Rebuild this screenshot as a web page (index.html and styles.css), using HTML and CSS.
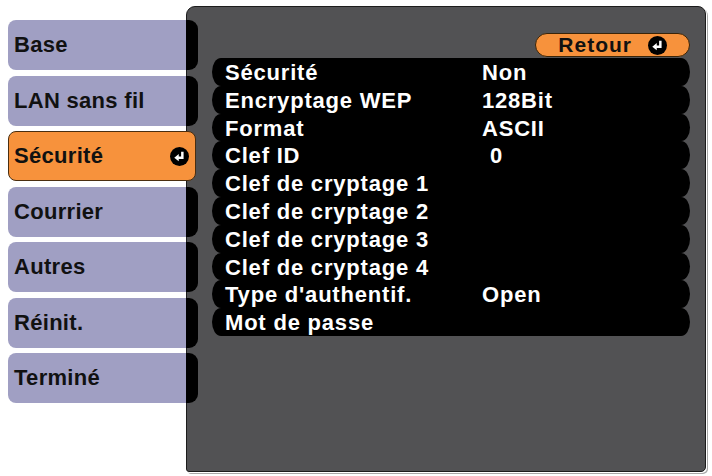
FILE: index.html
```html
<!DOCTYPE html>
<html lang="fr">
<head>
    <meta charset="UTF-8">
    <meta name="viewport" content="width=device-width, initial-scale=1.0">
    <title>Sécurité</title>
    <link rel="stylesheet" href="styles.css">
</head>
<body>
    <div class="menu">
        <div class="menu-item"><span class="menu-label">Base</span><span class="menu-tab"></span></div>
        <div class="menu-item"><span class="menu-label">LAN sans fil</span><span class="menu-tab"></span></div>
        <div class="menu-item active">
            <span class="menu-label">Sécurité</span>
            <svg class="enter-icon" viewBox="0 0 20 20"><circle cx="10" cy="10" r="10"/><path d="M13 5 V11.2 H8.5" /><polygon points="4.5,11.2 9.2,7.4 9.2,15"/></svg>
        </div>
        <div class="menu-item"><span class="menu-label">Courrier</span><span class="menu-tab"></span></div>
        <div class="menu-item"><span class="menu-label">Autres</span><span class="menu-tab"></span></div>
        <div class="menu-item"><span class="menu-label">Réinit.</span><span class="menu-tab"></span></div>
        <div class="menu-item"><span class="menu-label">Terminé</span><span class="menu-tab"></span></div>
    </div>
    <div class="panel">
        <div class="back-row">
            <div class="back-btn">
                <span>Retour</span>
                <svg class="enter-icon" viewBox="0 0 20 20"><circle cx="10" cy="10" r="10"/><path d="M13 5 V11.2 H8.5" /><polygon points="4.5,11.2 9.2,7.4 9.2,15"/></svg>
            </div>
        </div>
        <div class="settings">
            <div class="row"><span>Sécurité</span><span>Non</span></div>
            <div class="row"><span>Encryptage WEP</span><span>128Bit</span></div>
            <div class="row"><span>Format</span><span>ASCII</span></div>
            <div class="row"><span>Clef ID</span><span class="indent">0</span></div>
            <div class="row"><span>Clef de cryptage 1</span><span></span></div>
            <div class="row"><span>Clef de cryptage 2</span><span></span></div>
            <div class="row"><span>Clef de cryptage 3</span><span></span></div>
            <div class="row"><span>Clef de cryptage 4</span><span></span></div>
            <div class="row"><span>Type d'authentif.</span><span>Open</span></div>
            <div class="row"><span>Mot de passe</span><span></span></div>
        </div>
    </div>
</body>
</html>
```

FILE: styles.css
```css
* {
    margin: 0;
    padding: 0;
    box-sizing: border-box;
}
html, body {
    height: 100%;
}
body {
    font-family: "Liberation Sans", Arial, sans-serif;
    background: #ffffff;
    display: flex;
    overflow: hidden;
}
.menu {
    position: relative;
    z-index: 1;
    width: 178px;
    margin-left: 8px;
    padding-top: 20px;
    display: flex;
    flex-direction: column;
    gap: 5.5px;
}
.menu-item {
    display: flex;
    height: 50px;
    margin-right: -12px;
}
.menu-label {
    flex: 1;
    display: flex;
    align-items: center;
    padding-left: 6px;
    background: #a09fc3;
    border-radius: 8px 0 0 8px;
    font-size: 22px;
    font-weight: bold;
    letter-spacing: 0.3px;
    color: #111;
}
.menu-tab {
    width: 12px;
    background: #000;
    border-radius: 0 9px 9px 0;
}
.menu-item.active {
    margin-right: -10px;
    align-items: center;
    background: #f7923c;
    border: 1px solid #4a2e10;
    border-radius: 8px;
    padding-right: 6px;
}
.menu-item.active .menu-label {
    background: none;
    padding-left: 5px;
}
.enter-icon {
    width: 19px;
    height: 19px;
    flex: none;
}
.enter-icon circle {
    fill: #000;
}
.enter-icon path {
    fill: none;
    stroke: #fff;
    stroke-width: 2.6;
}
.enter-icon polygon {
    fill: #fff;
}
.panel {
    flex: 1;
    margin: 6px 6px 4px 0;
    background: #525254;
    border: 1px solid #1c1c1c;
    border-radius: 9px 8px 5px 3px;
    box-shadow: 1px 1px 0 #ffffff, 2px 2px 0 #a8a8a8;
    padding: 26px 15px 0 25px;
}
.back-row {
    display: flex;
    justify-content: flex-end;
}
.back-btn {
    width: 155px;
    height: 24px;
    display: flex;
    align-items: center;
    justify-content: flex-end;
    gap: 16px;
    padding-right: 22px;
    background: #f7923c;
    border: 1px solid #3a2408;
    border-radius: 12px;
    font-size: 21px;
    font-weight: bold;
    letter-spacing: 1px;
    color: #111;
}
.settings {
    margin-top: 1px;
}
.row {
    height: 27.8px;
    display: grid;
    grid-template-columns: 257px 1fr;
    padding-left: 13px;
    padding-top: 1px;
    background: #000;
    border-radius: 9px / 13.9px;
    font-size: 22px;
    font-weight: bold;
    letter-spacing: 0.8px;
    line-height: 27px;
    color: #fff;
}
.indent {
    padding-left: 8px;
}
```
